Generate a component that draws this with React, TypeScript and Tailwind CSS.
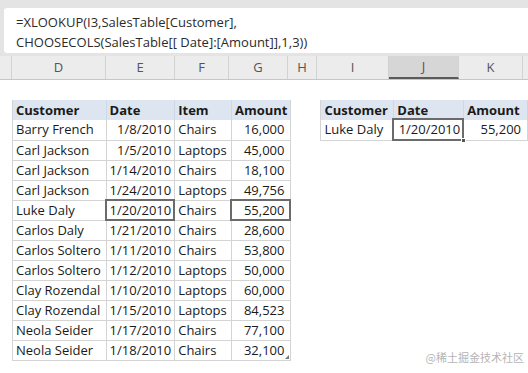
import React from "react";

type Row = [string, string, string, string];

const rows: Row[] = [
  ["Barry French", "1/8/2010", "Chairs", "16,000"],
  ["Carl Jackson", "1/5/2010", "Laptops", "45,000"],
  ["Carl Jackson", "1/14/2010", "Chairs", "18,100"],
  ["Carl Jackson", "1/24/2010", "Laptops", "49,756"],
  ["Luke Daly", "1/20/2010", "Chairs", "55,200"],
  ["Carlos Daly", "1/21/2010", "Chairs", "28,600"],
  ["Carlos Soltero", "1/11/2010", "Chairs", "53,800"],
  ["Carlos Soltero", "1/12/2010", "Laptops", "50,000"],
  ["Clay Rozendal", "1/10/2010", "Laptops", "60,000"],
  ["Clay Rozendal", "1/15/2010", "Laptops", "84,523"],
  ["Neola Seider", "1/17/2010", "Chairs", "77,100"],
  ["Neola Seider", "1/18/2010", "Chairs", "32,100"],
];

const sheetCols = [
  { label: "D", w: "w-[94px]" },
  { label: "E", w: "w-[69px]" },
  { label: "F", w: "w-[54px]" },
  { label: "G", w: "w-[59px]" },
  { label: "H", w: "w-[29px]" },
  { label: "I", w: "w-[72px]" },
  { label: "J", w: "w-[70px]" },
  { label: "K", w: "w-[64px]" },
];

const cell = "h-[20px] border-b border-r border-[#d4d4d4] px-[3px] leading-[19px] whitespace-nowrap";
const head = "h-[20px] border-r border-[#cfd8e6] bg-[#dde5f0] px-[3px] leading-[19px] font-bold text-left";

// thick grey box drawn over the active cell
const Picked = ({ handle = false }: { handle?: boolean }) => (
  <span className="absolute -left-[2px] -top-[2px] -right-[1px] -bottom-[1px] border-2 border-[#6b6b6b]">
    {handle && <span className="absolute -right-[4px] -bottom-[4px] w-[5px] h-[5px] bg-[#555] border border-white" />}
  </span>
);

export default function App() {
  return (
    <div className="w-[528px] h-[373px] bg-white overflow-hidden font-['Open_Sans','Noto_Sans',sans-serif] text-[13px] text-[#1a1a1a]">
      {/* formula bar */}
      <div className="bg-[#e4e4e4] pt-[8px] pl-[4px] pb-[3px]">
        <div className="bg-white rounded-l-[3px] h-[45px] pl-[12px] pt-[4px] text-[13px] leading-[20px] text-[#2b2b2b]">
          <div>=XLOOKUP(I3,SalesTable[Customer],</div>
          <div>CHOOSECOLS(SalesTable[[ Date]:[Amount]],1,3))</div>
        </div>
      </div>

      {/* column letters */}
      <div className="flex h-[24px] bg-[#ececec] border-b border-[#c6c6c6] text-[#555] text-[13px]">
        <div className="w-[12px] border-r border-[#d2d2d2]" />
        {sheetCols.map((c) => (
          <div
            key={c.label}
            className={`${c.w} flex items-center justify-center border-r border-[#d2d2d2] ${
              c.label === "J" ? "bg-[#d6d6d6] border-b-2 border-b-[#5a5a5a]" : ""
            }`}
          >
            {c.label}
          </div>
        ))}
      </div>

      <div className="flex pt-[20px] pl-[12px]">
        <table className="border-collapse table-fixed border-l border-[#d4d4d4]">
          <colgroup>
            <col className="w-[94px]" />
            <col className="w-[68px]" />
            <col className="w-[57px]" />
            <col className="w-[57px]" />
          </colgroup>
          <thead>
            <tr>
              <th className={head}>Customer</th>
              <th className={head}>Date</th>
              <th className={head}>Item</th>
              <th className={`${head} border-r-[#d4d4d4]`}>Amount</th>
            </tr>
          </thead>
          <tbody>
            {rows.map((r, i) => (
              <tr key={i}>
                <td className={cell}>{r[0]}</td>
                <td className={`${cell} text-right relative`}>
                  {r[1]}
                  {i === 4 && <Picked />}
                </td>
                <td className={cell}>{r[2]}</td>
                <td className={`${cell} text-right pr-[6px] relative`}>
                  {r[3]}
                  {i === 4 && <Picked />}
                  {i === rows.length - 1 && (
                    <span className="absolute right-[1px] bottom-[1px] w-0 h-0 border-l-[4px] border-l-transparent border-b-[4px] border-b-[#777]" />
                  )}
                </td>
              </tr>
            ))}
          </tbody>
        </table>

        <table className="ml-[29px] self-start border-collapse table-fixed border-l border-[#d4d4d4]">
          <colgroup>
            <col className="w-[73px]" />
            <col className="w-[70px]" />
            <col className="w-[64px]" />
          </colgroup>
          <thead>
            <tr>
              <th className={head}>Customer</th>
              <th className={head}>Date</th>
              <th className={`${head} border-r-[#d4d4d4]`}>Amount</th>
            </tr>
          </thead>
          <tbody>
            <tr>
              <td className={cell}>Luke Daly</td>
              <td className={`${cell} text-right relative`}>
                1/20/2010
                <Picked handle />
              </td>
              <td className={`${cell} text-right pr-[6px]`}>55,200</td>
            </tr>
          </tbody>
        </table>
      </div>

      <div className="flex justify-end pr-[4px] -mt-[11px] text-[11px] leading-[14px] text-[#b5b5b5] font-['Noto_Sans_CJK_SC',sans-serif]">
        @稀土掘金技术社区
      </div>
    </div>
  );
}
